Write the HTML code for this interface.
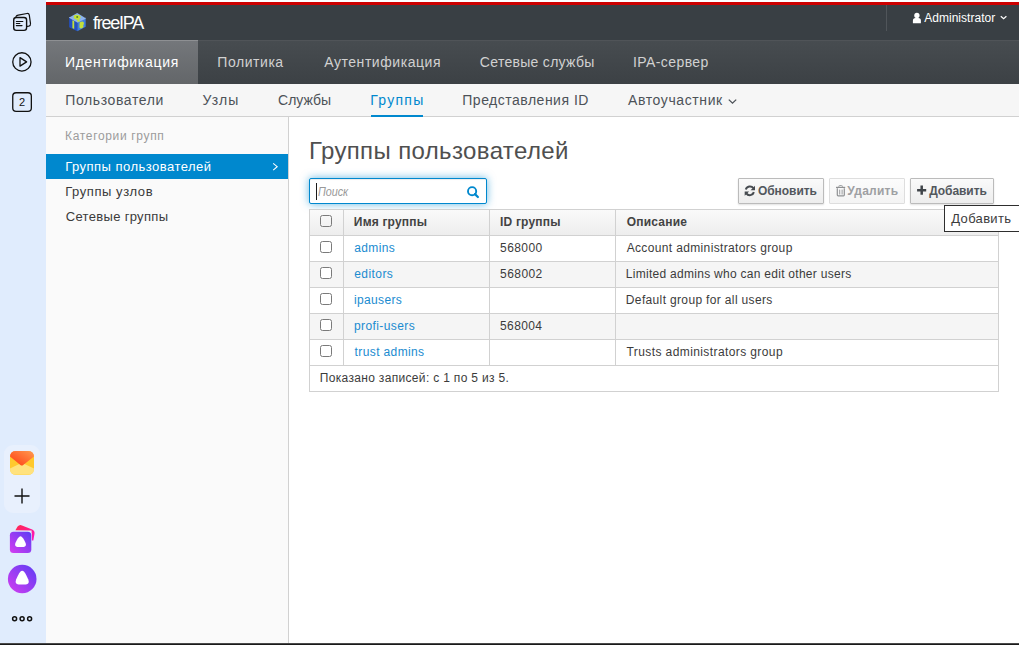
<!DOCTYPE html>
<html><head><meta charset="utf-8">
<style>
*{box-sizing:border-box;margin:0;padding:0}
html,body{width:1019px;height:645px;overflow:hidden;background:#fff;font-family:"Liberation Sans",sans-serif;position:relative}
body>div,body>svg{position:absolute}
.t{white-space:nowrap;line-height:1}
#bs{left:0;top:0;width:46px;height:645px;background:#e0ecfd}
#top{left:46px;top:0;width:973px;height:2px;background:#fff}
#red{left:46px;top:2px;width:973px;height:3px;background:#cc0000}
#hdr{left:46px;top:5px;width:973px;height:35px;background:#393f44}
#div1{left:886px;top:5px;width:1px;height:26px;background:#50555a}
#nav1{left:46px;top:40px;width:973px;height:44px;background:linear-gradient(#474c50,#3c4145);border-top:1px solid #505458}
#act{left:46px;top:40px;width:152px;height:44px;background:linear-gradient(#74777b,#636669);border-top:1px solid #8e9093}
#nav2{left:46px;top:84px;width:973px;height:33px;background:#f6f6f6;border-bottom:1px solid #d1d1d1}
#ul{left:371px;top:115px;width:52px;height:2px;background:#0088ce}
#side{left:46px;top:117px;width:243px;height:526px;background:#fafafa;border-right:1px solid #d1d1d1}
#sact{left:46px;top:154px;width:242px;height:25px;background:#0088ce}
#bot{left:0;top:643px;width:1019px;height:2px;background:linear-gradient(#4a4a4a 0,#4a4a4a 50%,#1a1a1a 50%)}
#srch{left:309px;top:178px;width:178px;height:26px;border:1px solid #0088ce;border-radius:2px;background:#fff;box-shadow:inset 0 1px 1px rgba(3,3,3,.075),0 0 8px rgba(0,136,206,.6)}
#cur{left:316px;top:183px;width:1px;height:17px;background:#1a1a1a}
.btn{height:26px;top:178px;border:1px solid #bbb;background:linear-gradient(#fafafa,#ededed);box-shadow:0 1px 2px rgba(3,3,3,.12);border-radius:1px}
#btn1{left:738px;width:86px}
#btn2{left:829px;width:76px;border-color:#dedede;background:linear-gradient(#fcfcfc,#f4f4f4);box-shadow:none}
#btn3{left:910px;width:84px}
#tbl{left:309px;top:209px;width:690px;height:183px;border:1px solid #d1d1d1;background:#fff}
#th{left:310px;top:210px;width:688px;height:26px;background:linear-gradient(#fafafa,#ededed);border-bottom:1px solid #d1d1d1}
.hl{left:310px;width:688px;height:1px;background:#d1d1d1}
.str{left:310px;width:688px;height:25px;background:#f5f5f5}
.vl{width:1px;background:#d1d1d1;top:210px;height:155px}
.cb{width:12px;height:12px;left:320px;border:1px solid #7a7a7a;border-radius:2.5px;background:#fff}
#tip{left:944px;top:205px;width:80px;height:27px;border:1px solid #2e2e2e;background:#fff}
/*MEASURE*/
</style></head><body>
<div id="bs"></div>
<svg style="left:0;top:0" width="46" height="645" viewBox="0 0 46 645">
  <!-- stacked cards -->
  <g fill="none" stroke="#111" stroke-linejoin="round" stroke-linecap="round">
    <path d="M16 16.5 Q16.6 15.4 18.2 15.1 L27 13.5 Q28.9 13.2 29.3 15.1 L30.5 23.6 Q30.7 25.7 28.8 26.1 L27.2 26.4" stroke-width="1.2"/>
    <rect x="13.7" y="17.5" width="12.9" height="12.9" rx="2.6" fill="#e0ecfd" stroke-width="1.4"/>
    <path d="M16.4 21.5h6.4M16.4 23.5h3.4M16.4 25.6h5.6" stroke-width="1.2"/>
  </g>
  <!-- play circle -->
  <circle cx="21.9" cy="61.9" r="9.15" fill="none" stroke="#111" stroke-width="1.3"/>
  <path d="M20 57.6 L26.6 61.9 L20 66.1 Z" fill="none" stroke="#111" stroke-width="1.3" stroke-linejoin="round"/>
  <!-- 2 box -->
  <rect x="12.75" y="92.75" width="18.6" height="18.6" rx="3.4" fill="none" stroke="#111" stroke-width="1.3"/>
  <text x="22.1" y="105.9" font-family="Liberation Sans" font-size="11" font-weight="400" text-anchor="middle" fill="#111">2</text>
  <!-- panel -->
  <rect x="4" y="445" width="36" height="68" rx="9" fill="#e8f0fd"/>
  <defs>
    <linearGradient id="mt" x1="0" y1="1" x2="1" y2="0"><stop offset="0" stop-color="#ff3a10"/><stop offset="1" stop-color="#ff9a50"/></linearGradient>
    <linearGradient id="ap" x1="1" y1="0" x2="0" y2="1"><stop offset="0" stop-color="#5a3df5"/><stop offset="1" stop-color="#d63df0"/></linearGradient>
  </defs>
  <rect x="10" y="451" width="24" height="24" rx="6" fill="#ffc92e"/>
  <path d="M10 468.5 L21.8 462.8 L34 468.5 L34 469 Q34 474.8 28 474.8 L16 474.8 Q10 474.8 10 469 Z" fill="#ffe27e"/>
  <path d="M16 451 L28 451 Q34 451 34 456.6 L23.2 465 Q21.8 466.2 20.4 465 L10 456.6 Q10 451 16 451 Z" fill="url(#mt)"/>
  <path d="M22 488.5v15M14.5 496h15" stroke="#111" stroke-width="1.4"/>
  <!-- alice app -->
  <defs><linearGradient id="pk" x1="0" y1="0" x2="1" y2="1"><stop offset="0" stop-color="#ff2a4a"/><stop offset="1" stop-color="#ff10c8"/></linearGradient></defs>
  <path d="M15.4 530.2 L17.6 526.6 Q19.4 524.4 22 525.4 L32.2 529.6 Q34.9 530.9 34.5 533.8 L33.3 540.4 L31.6 540.4 L31.6 530.4 Z" fill="url(#pk)"/>
  <rect x="9.4" y="531.2" width="22.4" height="22.4" rx="4" fill="#e0ebfc"/>
  <rect x="9.9" y="531.7" width="21.4" height="21.4" rx="3.6" fill="url(#ap)"/>
  <path d="M20.5 536.3 Q22 536.3 24 539.8 L25.6 543 Q26.8 546.4 23.6 547 L17.4 547 Q14.2 546.4 15.4 543 L17 539.8 Q19 536.3 20.5 536.3 Z" fill="#fff"/>
  <!-- alice circle -->
  <circle cx="22.2" cy="579" r="14.3" fill="url(#ap)"/>
  <path d="M22.2 570.8 Q24 570.8 26.3 575.2 L28.3 579.5 Q30 583.8 25.8 584.5 L18.6 584.5 Q14.4 583.8 16.1 579.5 L18.1 575.2 Q20.4 570.8 22.2 570.8 Z" fill="#fff"/>
  <!-- dots -->
  <g fill="none" stroke="#111" stroke-width="1.5"><circle cx="14.6" cy="618.7" r="2"/><circle cx="22.1" cy="618.7" r="2"/><circle cx="29.6" cy="618.7" r="2"/></g>
</svg>
<div id="top"></div>
<div id="red"></div>
<div id="hdr"></div>
<div id="div1"></div>
<svg style="left:66px;top:10px" width="24" height="24" viewBox="66 10 24 24">
  <path d="M77.2 13 L85.7 18.2 L77.5 22.2 L69.2 17.4 Z" fill="#8ab2ee"/>
  <path d="M69.2 17.4 L77.5 22.2 L77.3 31.2 L69.2 27.3 Z" fill="#2350c4"/>
  <path d="M85.7 18.2 L77.5 22.2 L77.3 31.2 L85.7 26.7 Z" fill="#3f7fe2"/>
  <path d="M69.2 17.4 L77.5 22.2 L85.7 18.2" fill="none" stroke="#a9c6f5" stroke-width="0.8"/>
  <path d="M72.4 20.2 L74.2 21.1 L74.2 28.9 L72.4 28 Z" fill="#c2e03a"/>
  <path d="M74 15.6 Q76.5 14.2 79.6 15.4 Q81.6 16.6 80 18.6 L79.2 19.2 L80 21.2 L78 22 L76.6 19.6 Q74.4 19.4 73.6 17.6 Z" fill="#c2e03a"/>
  <circle cx="77.2" cy="17" r="1" fill="#5a8a20"/>
  <path d="M79.6 22.6 Q82.6 20.6 83.8 22.4 Q84.4 24.2 83.2 25.2 Q84.2 26.6 82.8 27.8 Q80.6 29.2 79.4 27.6 Z" fill="#c2e03a"/>
</svg>
<div id="nav1"></div>
<div id="act"></div>
<div id="nav2"></div>
<div id="ul"></div>
<div id="side"></div>
<div id="sact"></div>
<svg style="left:270px;top:160px" width="12" height="14" viewBox="270 160 12 14"><path d="M273.2 163.3 L277.2 166.7 L273.2 170.1" fill="none" stroke="#fff" stroke-width="1.1"/></svg>
<!-- header user icon + chevron -->
<svg style="left:910px;top:10px" width="100" height="16" viewBox="910 10 100 16">
  <circle cx="916.9" cy="15.5" r="2.65" fill="#fff"/>
  <path d="M912.9 23.2 L912.9 20.8 Q912.9 18.1 915.5 18.1 L918.3 18.1 Q920.9 18.1 920.9 20.8 L920.9 23.2 Z" fill="#fff"/>
  <path d="M1000.8 16.2 L1003.6 18.8 L1006.4 16.2" fill="none" stroke="#fff" stroke-width="1.2"/>
</svg>
<svg style="left:725px;top:95px" width="16" height="12" viewBox="725 95 16 12"><path d="M728.8 99.6 L732.5 103.2 L736.2 99.6" fill="none" stroke="#4d5258" stroke-width="1.3"/></svg>
<div id="srch"></div>
<div id="cur"></div>
<svg style="left:464px;top:184px" width="18" height="17" viewBox="464 184 18 17"><circle cx="472.1" cy="191.2" r="4.1" fill="none" stroke="#0088ce" stroke-width="1.9"/><path d="M475 194.1 L477.9 197" stroke="#0088ce" stroke-width="2.2" stroke-linecap="round"/></svg>
<div class="btn" id="btn1"></div>
<div class="btn" id="btn2"></div>
<div class="btn" id="btn3"></div>
<svg style="left:742px;top:183px" width="16" height="16" viewBox="742 183 16 16">
  <path d="M753.4 188.2 A4.3 4.3 0 0 0 745.8 189.5" fill="none" stroke="#464b50" stroke-width="2"/>
  <path d="M755 185.8 L755 190.2 L750.6 190.2 Z" fill="#464b50"/>
  <path d="M746.3 193.4 A4.3 4.3 0 0 0 753.9 192.1" fill="none" stroke="#464b50" stroke-width="2"/>
  <path d="M744.7 195.8 L744.7 191.4 L749.1 191.4 Z" fill="#464b50"/>
</svg>
<svg style="left:834px;top:183px" width="14" height="16" viewBox="834 183 14 16">
  <path d="M836 187.4h9.2" fill="none" stroke="#8f9193" stroke-width="1.2"/>
  <path d="M838.9 187v-.9q0-.6.6-.6h2.2q.6 0 .6.6v.9" fill="none" stroke="#a3a5a7" stroke-width="1"/>
  <path d="M837.3 188.2v6.9q0 .8.8.8h5.4q.8 0 .8-.8v-6.9" fill="none" stroke="#8f9193" stroke-width="1.2"/>
  <path d="M839.7 189.6v4.9M842.1 189.6v4.9" stroke="#9a9c9e" stroke-width="1"/>
</svg>
<svg style="left:915px;top:184px" width="14" height="14" viewBox="915 184 14 14"><path d="M921.7 185.6v9.1M917.1 190.2h9.1" stroke="#3f4449" stroke-width="2.5"/></svg>
<div id="tbl"></div>
<div id="th"></div>
<div class="str" style="top:262px"></div>
<div class="str" style="top:314px"></div>
<div class="hl" style="top:261px"></div>
<div class="hl" style="top:287px"></div>
<div class="hl" style="top:313px"></div>
<div class="hl" style="top:339px"></div>
<div class="hl" style="top:365px"></div>
<div class="vl" style="left:343px"></div>
<div class="vl" style="left:489px"></div>
<div class="vl" style="left:615px"></div>
<div class="cb" style="top:215px;background:transparent"></div>
<div class="cb" style="top:241px"></div>
<div class="cb" style="top:267px"></div>
<div class="cb" style="top:293px"></div>
<div class="cb" style="top:319px"></div>
<div class="cb" style="top:345px"></div>
<div id="tip"></div>
<div id="bot"></div>
<div class="t" id="lg" style="left:93.06px;top:14.00px;font-size:18px;font-weight:400;font-style:normal;color:#ffffff;letter-spacing:-1.261px">freeIPA</div>
<div class="t" id="adm" style="left:924.16px;top:12.00px;font-size:12px;font-weight:400;font-style:normal;color:#ffffff;letter-spacing:0.040px">Administrator</div>
<div class="t" id="n1a" style="left:65.00px;top:55.00px;font-size:14px;font-weight:400;font-style:normal;color:#ffffff;letter-spacing:0.691px">Идентификация</div>
<div class="t" id="n1b" style="left:217.35px;top:55.00px;font-size:14px;font-weight:400;font-style:normal;color:#d1d1d1;letter-spacing:0.548px">Политика</div>
<div class="t" id="n1c" style="left:324.17px;top:55.00px;font-size:14px;font-weight:400;font-style:normal;color:#d1d1d1;letter-spacing:0.555px">Аутентификация</div>
<div class="t" id="n1d" style="left:479.86px;top:55.00px;font-size:14px;font-weight:400;font-style:normal;color:#d1d1d1;letter-spacing:0.294px">Сетевые службы</div>
<div class="t" id="n1e" style="left:633.04px;top:55.00px;font-size:14px;font-weight:400;font-style:normal;color:#d1d1d1;letter-spacing:0.412px">IPA-сервер</div>
<div class="t" id="n2a" style="left:65.35px;top:93.00px;font-size:14px;font-weight:400;font-style:normal;color:#4d5258;letter-spacing:0.593px">Пользователи</div>
<div class="t" id="n2b" style="left:202.58px;top:93.00px;font-size:14px;font-weight:400;font-style:normal;color:#4d5258;letter-spacing:1.018px">Узлы</div>
<div class="t" id="n2c" style="left:278.07px;top:93.00px;font-size:14px;font-weight:400;font-style:normal;color:#4d5258;letter-spacing:-0.027px">Службы</div>
<div class="t" id="n2d" style="left:370.30px;top:93.00px;font-size:14px;font-weight:400;font-style:normal;color:#0088ce;letter-spacing:1.258px">Группы</div>
<div class="t" id="n2e" style="left:462.30px;top:93.00px;font-size:14px;font-weight:400;font-style:normal;color:#4d5258;letter-spacing:0.497px">Представления ID</div>
<div class="t" id="n2f" style="left:628.09px;top:93.00px;font-size:14px;font-weight:400;font-style:normal;color:#4d5258;letter-spacing:0.603px">Автоучастник</div>
<div class="t" id="sc" style="left:65.11px;top:130.00px;font-size:12px;font-weight:400;font-style:normal;color:#9c9c9c;letter-spacing:0.653px">Категории групп</div>
<div class="t" id="s1" style="left:65.23px;top:160.00px;font-size:13px;font-weight:400;font-style:normal;color:#ffffff;letter-spacing:0.480px">Группы пользователей</div>
<div class="t" id="s2" style="left:65.23px;top:185.00px;font-size:13px;font-weight:400;font-style:normal;color:#3b3b3b;letter-spacing:0.568px">Группы узлов</div>
<div class="t" id="s3" style="left:65.69px;top:210.00px;font-size:13px;font-weight:400;font-style:normal;color:#3b3b3b;letter-spacing:0.328px">Сетевые группы</div>
<div class="t" id="ttl" style="left:308.92px;top:139.00px;font-size:24px;font-weight:400;font-style:normal;color:#4f4f4f;letter-spacing:0.374px">Группы пользователей</div>
<div class="t" id="ph" style="left:317.50px;top:186.00px;font-size:12px;font-weight:400;font-style:italic;color:#999999;letter-spacing:-0.077px;transform:scaleX(0.9);transform-origin:0 0">Поиск</div>
<div class="t" id="b1" style="left:757.98px;top:185.00px;font-size:12px;font-weight:700;font-style:normal;color:#52575d;letter-spacing:-0.058px">Обновить</div>
<div class="t" id="b2" style="left:847.33px;top:185.00px;font-size:12px;font-weight:700;font-style:normal;color:#9ea0a3;letter-spacing:0.245px">Удалить</div>
<div class="t" id="b3" style="left:929.14px;top:185.00px;font-size:12px;font-weight:700;font-style:normal;color:#52575d;letter-spacing:-0.054px">Добавить</div>
<div class="t" id="tt" style="left:951.36px;top:212.00px;font-size:13px;font-weight:400;font-style:normal;color:#3c3c3c;letter-spacing:0.306px">Добавить</div>
<div class="t" id="h1" style="left:353.85px;top:216.00px;font-size:12px;font-weight:700;font-style:normal;color:#434343;letter-spacing:0.182px">Имя группы</div>
<div class="t" id="h2" style="left:500.00px;top:216.00px;font-size:12px;font-weight:700;font-style:normal;color:#434343;letter-spacing:0.189px">ID группы</div>
<div class="t" id="h3" style="left:626.67px;top:216.00px;font-size:12px;font-weight:700;font-style:normal;color:#434343;letter-spacing:0.229px">Описание</div>
<div class="t" id="r1a" style="left:354.24px;top:242.00px;font-size:12px;font-weight:400;font-style:normal;color:#1a8bd0;letter-spacing:0.371px">admins</div>
<div class="t" id="r2a" style="left:354.27px;top:268.00px;font-size:12px;font-weight:400;font-style:normal;color:#1a8bd0;letter-spacing:0.429px">editors</div>
<div class="t" id="r3a" style="left:353.96px;top:294.00px;font-size:12px;font-weight:400;font-style:normal;color:#1a8bd0;letter-spacing:0.356px">ipausers</div>
<div class="t" id="r4a" style="left:353.97px;top:320.00px;font-size:12px;font-weight:400;font-style:normal;color:#1a8bd0;letter-spacing:0.402px">profi-users</div>
<div class="t" id="r5a" style="left:354.62px;top:346.00px;font-size:12px;font-weight:400;font-style:normal;color:#1a8bd0;letter-spacing:0.378px">trust admins</div>
<div class="t" id="r1b" style="left:500.05px;top:242.00px;font-size:12px;font-weight:400;font-style:normal;color:#3b3b3b;letter-spacing:0.424px">568000</div>
<div class="t" id="r2b" style="left:500.05px;top:268.00px;font-size:12px;font-weight:400;font-style:normal;color:#3b3b3b;letter-spacing:0.436px">568002</div>
<div class="t" id="r4b" style="left:500.05px;top:320.00px;font-size:12px;font-weight:400;font-style:normal;color:#3b3b3b;letter-spacing:0.378px">568004</div>
<div class="t" id="r1c" style="left:626.65px;top:242.00px;font-size:12px;font-weight:400;font-style:normal;color:#3b3b3b;letter-spacing:0.356px">Account administrators group</div>
<div class="t" id="r2c" style="left:625.87px;top:268.00px;font-size:12px;font-weight:400;font-style:normal;color:#3b3b3b;letter-spacing:0.277px">Limited admins who can edit other users</div>
<div class="t" id="r3c" style="left:625.87px;top:294.00px;font-size:12px;font-weight:400;font-style:normal;color:#3b3b3b;letter-spacing:0.348px">Default group for all users</div>
<div class="t" id="r5c" style="left:626.59px;top:346.00px;font-size:12px;font-weight:400;font-style:normal;color:#3b3b3b;letter-spacing:0.400px">Trusts administrators group</div>
<div class="t" id="ft" style="left:319.75px;top:372.00px;font-size:12px;font-weight:400;font-style:normal;color:#3b3b3b;letter-spacing:0.327px">Показано записей: с 1 по 5 из 5.</div>
</body></html>
